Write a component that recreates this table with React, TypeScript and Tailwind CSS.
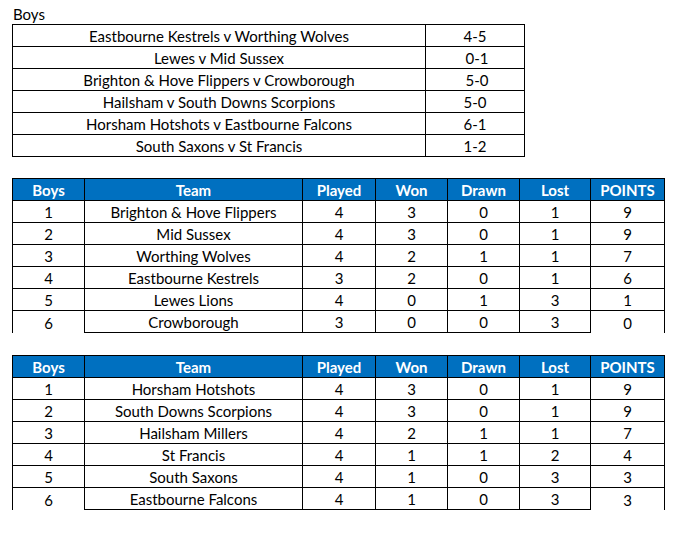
import React from "react";

const results: [string, string, boolean?][] = [
  ["Eastbourne Kestrels v Worthing Wolves", "4-5"],
  ["Lewes v Mid Sussex", "0-1", true],
  ["Brighton & Hove Flippers v Crowborough", "5-0", true],
  ["Hailsham v South Downs Scorpions", "5-0"],
  ["Horsham Hotshots v Eastbourne Falcons", "6-1"],
  ["South Saxons v St Francis", "1-2"],
];

type Row = [string, string, string, string, string, string, string];

const table1: Row[] = [
  ["1", "Brighton & Hove Flippers", "4", "3", "0", "1", "9"],
  ["2", "Mid Sussex", "4", "3", "0", "1", "9"],
  ["3", "Worthing Wolves", "4", "2", "1", "1", "7"],
  ["4", "Eastbourne Kestrels", "3", "2", "0", "1", "6"],
  ["5", "Lewes Lions", "4", "0", "1", "3", "1"],
  ["6", "Crowborough", "3", "0", "0", "3", "0"],
];

const table2: Row[] = [
  ["1", "Horsham Hotshots", "4", "3", "0", "1", "9"],
  ["2", "South Downs Scorpions", "4", "3", "0", "1", "9"],
  ["3", "Hailsham Millers", "4", "2", "1", "1", "7"],
  ["4", "St Francis", "4", "1", "1", "2", "4"],
  ["5", "South Saxons", "4", "1", "0", "3", "3"],
  ["6", "Eastbourne Falcons", "4", "1", "0", "3", "3"],
];

const headers = ["Boys", "Team", "Played", "Won", "Drawn", "Lost", "POINTS"];

function League({ rows }: { rows: Row[] }) {
  return (
    <div className="grid grid-cols-[72px_218px_73px_72px_72px_71px_74px] border-l border-t border-black w-fit">
      {headers.map((h) => (
        <div
          key={h}
          className="h-[22px] bg-[#0070c0] text-white font-bold border-r border-b border-black flex items-center justify-center pt-[1px]"
        >
          {h}
        </div>
      ))}
      {rows.map((r, ri) =>
        r.map((c, ci) => {
          const last = ri === rows.length - 1;
          const noBottom = last && (ci === 0 || ci === 6);
          return (
            <div
              key={ri + "-" + ci}
              className={
                "h-[22px] border-r border-black flex items-center justify-center pt-[2px] " +
                (noBottom ? "" : "border-b")
              }
            >
              {c}
            </div>
          );
        })
      )}
    </div>
  );
}

export default function App() {
  return (
    <div
      className="w-[689px] h-[534px] bg-white text-black text-[15px] leading-none pl-[12px] pt-[2px]"
      style={{ fontFamily: "Lato, 'Noto Sans', sans-serif" }}
    >
      <div className="h-[22px] flex items-center pl-[1px] pt-[3px]">Boys</div>
      <div className="grid grid-cols-[413px_99px] border-l border-t border-black w-fit">
        {results.map(([m, s, shift]) => (
          <React.Fragment key={m}>
            <div className="h-[22px] border-r border-b border-black flex items-center justify-center pt-[2px]">
              {m}
            </div>
            <div
              className={
                "h-[22px] border-r border-b border-black flex items-center justify-center pt-[2px] " +
                (shift ? "pl-[4px]" : "")
              }
            >
              {s}
            </div>
          </React.Fragment>
        ))}
      </div>
      <div className="h-[21px]" />
      <League rows={table1} />
      <div className="h-[22px]" />
      <League rows={table2} />
    </div>
  );
}
